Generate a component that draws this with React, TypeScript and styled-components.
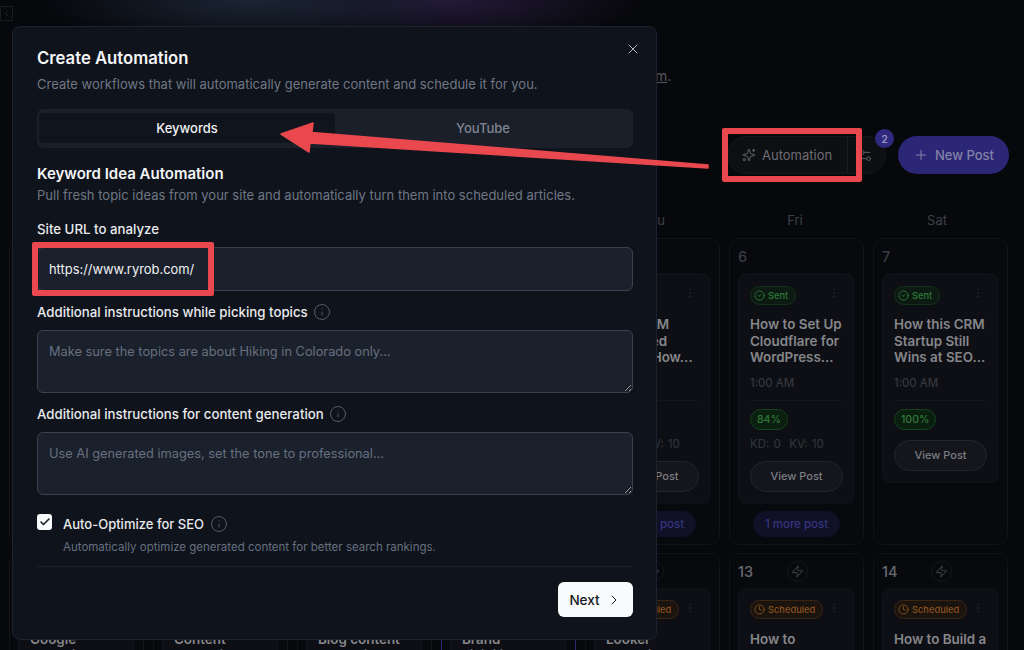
import React from 'react';
import styled, { createGlobalStyle } from 'styled-components';
import {
  Check,
  ChevronLeft,
  ChevronRight,
  CircleCheck,
  Clock,
  EllipsisVertical,
  Info,
  Plus,
  Settings2,
  Sparkles,
  X,
  Zap
} from 'lucide-react';

const GlobalStyle = createGlobalStyle`
  * {
    box-sizing: border-box;
  }

  html,
  body {
    margin: 0;
    padding: 0;
    background: #07080c;
    font-family: 'Inter', 'Liberation Sans', sans-serif;
  }
`;

const Page = styled.div`
  position: relative;
  width: 1024px;
  height: 650px;
  overflow: hidden;
  background:
    radial-gradient(ellipse 210px 48px at 250px 0, #1b2535 0%, rgba(27, 37, 53, 0) 100%),
    radial-gradient(ellipse 190px 44px at 450px 0, #231a38 0%, rgba(35, 26, 56, 0) 100%),
    #07080c;
`;

const TopStrip = styled.div`
  height: 66px;
  padding-top: 6px;
`;

const SidebarToggle = styled.div`
  display: flex;
  align-items: center;
  justify-content: center;
  width: 13px;
  height: 15px;
  border: 1px solid #181b22;
  color: #2c3038;
`;

const Note = styled.p`
  height: 20px;
  margin: 0;
  padding-left: 655px;
  font-size: 14px;
  line-height: 20px;
  color: #54565c;

  span {
    text-decoration: underline;
  }
`;

const Toolbar = styled.div`
  display: flex;
  justify-content: flex-end;
  gap: 12px;
  height: 38px;
  margin-top: 50px;
  padding-right: 15px;
`;

const AutomationGroup = styled.div`
  position: relative;
  display: flex;
  width: 159px;
  border: 1px solid #15171d;
  border-radius: 19px;
  background: #0e0f13;
`;

const AutomationButton = styled.div`
  display: flex;
  align-items: center;
  gap: 6px;
  width: 120px;
  padding-left: 14px;
  border-right: 1px solid #1b1d23;
  font-size: 13px;
  color: #6d6e73;
`;

const SettingsButton = styled.div`
  display: flex;
  align-items: center;
  padding-left: 10px;
  color: #5e6066;
`;

const CountBadge = styled.span`
  position: absolute;
  top: -8px;
  right: -9px;
  display: flex;
  align-items: center;
  justify-content: center;
  width: 19px;
  height: 19px;
  border-radius: 50%;
  background: #2f2a80;
  font-size: 10px;
  font-weight: 600;
  color: #9a9ac4;
`;

const NewPostButton = styled.div`
  display: flex;
  align-items: center;
  justify-content: center;
  gap: 6px;
  width: 111px;
  border-radius: 19px;
  background: #2b2675;
  font-size: 13px;
  font-weight: 500;
  color: #8382a8;
`;

const Weekdays = styled.div`
  display: grid;
  grid-template-columns: repeat(7, 133px);
  column-gap: 9px;
  height: 20px;
  margin-top: 36px;
  padding-left: 18.5px;
`;

const Weekday = styled.div`
  font-size: 13px;
  line-height: 20px;
  text-align: center;
  color: #3d4048;
`;

const CalendarGrid = styled.div`
  display: grid;
  grid-template-columns: repeat(7, 135px);
  gap: 8px 9px;
  margin-top: 8px;
  padding-left: 9px;
`;

const Cell = styled.div<{ $today?: boolean }>`
  display: flex;
  flex-direction: column;
  align-items: stretch;
  padding: 8px 8px 7px;
  border: 1px solid ${({ $today }) => ($today ? '#2b2872' : '#111319')};
  border-radius: 10px;
  background: #08090d;
`;

const CellHead = styled.div`
  display: flex;
  align-items: center;
  height: 21px;
  margin-top: -1px;
  margin-bottom: 6px;
`;

const DateNumber = styled.span<{ $future?: boolean }>`
  width: 49px;
  font-size: 14.5px;
  font-weight: 500;
  color: ${({ $future }) => ($future ? '#66686e' : '#393c44')};
`;

const BoltRound = styled.span`
  display: flex;
  align-items: center;
  justify-content: center;
  width: 21px;
  height: 21px;
  border: 1px solid #15171c;
  border-radius: 50%;
  color: #35373d;
`;

const PostCard = styled.div`
  padding: 11px;
  border: 1px solid #101217;
  border-radius: 8px;
  background: #0e0f14;
`;

const CardTop = styled.div`
  display: flex;
  align-items: center;
  justify-content: space-between;
  height: 20px;
  margin-right: 3px;
  color: #24262b;

  > svg {
    margin-bottom: 4px;
  }
`;

const StatusPill = styled.span<{ $scheduled?: boolean }>`
  display: inline-flex;
  align-items: center;
  gap: 3px;
  height: 19px;
  padding: 0 7px 0 3px;
  border: 1px solid ${({ $scheduled }) => ($scheduled ? '#3a2614' : '#12331a')};
  border-radius: 10px;
  background: ${({ $scheduled }) => ($scheduled ? '#1a130e' : '#0c1a11')};
  font-size: 9.3px;
  font-weight: 500;
  color: ${({ $scheduled }) => ($scheduled ? '#8a5220' : '#2f7a3a')};
`;

const CardTitle = styled.div`
  margin-top: 11px;
  font-size: 13.4px;
  font-weight: 600;
  line-height: 16.5px;
  white-space: pre-line;
  color: #85868a;
`;

const PostTime = styled.div`
  margin-top: 10px;
  font-size: 11.5px;
  line-height: 14px;
  color: #3a3d45;
`;

const CardDivider = styled.div`
  height: 1px;
  margin-top: 10px;
  background: #15171c;
`;

const ScorePill = styled.span`
  display: inline-flex;
  align-items: center;
  height: 21px;
  margin-top: 8px;
  padding: 0 6px;
  border: 1px solid #14441d;
  border-radius: 11px;
  background: #0b1f10;
  font-size: 10.5px;
  font-weight: 500;
  color: #2f7a3a;
`;

const KeywordStats = styled.div`
  margin-top: 7px;
  font-size: 11.5px;
  line-height: 14px;
  word-spacing: 1px;
  white-space: pre;
  color: #33363c;
`;

const ViewPostButton = styled.div`
  display: flex;
  align-items: center;
  justify-content: center;
  height: 31px;
  margin-top: 10px;
  border: 1px solid #22252c;
  border-radius: 16px;
  background: #14161c;
  font-size: 11px;
  font-weight: 500;
  color: #7c7d82;
`;

const MorePosts = styled.div`
  align-self: center;
  margin-top: 7px;
  padding: 0 12px;
  border-radius: 13px;
  background: #101026;
  font-size: 11.5px;
  font-weight: 500;
  line-height: 26px;
  color: #34347e;
`;

const Modal = styled.div`
  position: absolute;
  top: 26px;
  left: 12px;
  width: 645px;
  height: 614px;
  padding: 20px 23px 0 24px;
  border: 1px solid #1b2330;
  border-radius: 8px;
  background: #0f131b;
`;

const CloseButton = styled.div`
  position: absolute;
  top: 14px;
  right: 15px;
  display: flex;
  color: #b4b8c0;
`;

const ModalTitle = styled.h2`
  margin: 0;
  font-size: 16.7px;
  font-weight: 600;
  line-height: 22px;
  color: #f4f5f7;
`;

const MutedText = styled.p`
  margin: 5px 0 0;
  font-size: 13px;
  line-height: 20px;
  color: #6f7785;
`;

const Tabs = styled.div`
  display: grid;
  grid-template-columns: 1fr 1fr;
  height: 39px;
  margin-top: 15px;
  padding: 4px 2px 5px;
  border-radius: 6px;
  background: #1b1f2a;
`;

const Tab = styled.div<{ $active?: boolean }>`
  display: flex;
  align-items: center;
  justify-content: center;
  border-radius: 4px;
  background: ${({ $active }) => ($active ? '#10141c' : 'transparent')};
  font-size: 13px;
  font-weight: 500;
  color: ${({ $active }) => ($active ? '#f0f1f3' : '#7d8491')};
`;

const SectionTitle = styled.h3`
  margin: 15px 0 0;
  font-size: 15px;
  font-weight: 600;
  line-height: 22px;
  color: #f4f5f7;
`;

const SectionText = styled(MutedText)`
  margin-top: 0;
`;

const FieldLabel = styled.label<{ $first?: boolean }>`
  display: flex;
  align-items: center;
  gap: 5px;
  margin-top: ${({ $first }) => ($first ? '14px' : '11px')};
  font-size: 13.25px;
  font-weight: 500;
  line-height: 20px;
  color: #e9eaee;
`;

const InfoIcon = styled(Info)`
  flex: none;
  color: #59616e;
`;

const TextInput = styled.input`
  display: block;
  width: 100%;
  height: 44px;
  margin-top: 8px;
  padding: 0 11px;
  border: 1px solid #3a424f;
  border-radius: 6px;
  outline: none;
  background: #1b212c;
  font-family: inherit;
  font-size: 12.9px;
  color: #f0f1f3;
`;

const TextArea = styled.textarea`
  display: block;
  width: 100%;
  height: 63px;
  margin-top: 8px;
  padding: 12px 11px;
  border: 1px solid #3a424f;
  border-radius: 6px;
  outline: none;
  background: #1b212c;
  font-family: inherit;
  font-size: 12.8px;
  line-height: 18px;
  color: #f0f1f3;

  &::placeholder {
    color: #667080;
    opacity: 1;
  }
`;

const CheckRow = styled.div`
  display: flex;
  align-items: center;
  height: 20px;
  margin-top: 19px;
  font-size: 13px;
  font-weight: 500;
  color: #e9eaee;
`;

const CheckBox = styled.span`
  display: flex;
  align-items: center;
  justify-content: center;
  width: 15px;
  height: 16px;
  margin-right: 11px;
  margin-top: -4px;
  border-radius: 3px;
  background: #f9fafb;
  color: #10141c;
`;

const CheckLabel = styled.span`
  margin-right: 6px;
`;

const HelperText = styled.p`
  margin: 5px 0 0 26px;
  font-size: 11.5px;
  line-height: 16px;
  color: #667080;
`;

const Divider = styled.div`
  height: 1px;
  margin-top: 11px;
  background: #1b2330;
`;

const Actions = styled.div`
  display: flex;
  justify-content: flex-end;
  margin-top: 15px;
`;

const NextButton = styled.div`
  display: flex;
  align-items: center;
  justify-content: center;
  gap: 6px;
  width: 75px;
  height: 35px;
  border-radius: 6px;
  background: #f9fafb;
  font-size: 13.5px;
  font-weight: 500;
  color: #141820;
`;

const RedFrame = styled.div<{ $left: number; $top: number; $width: number; $height: number }>`
  position: absolute;
  left: ${({ $left }) => $left}px;
  top: ${({ $top }) => $top}px;
  width: ${({ $width }) => $width}px;
  height: ${({ $height }) => $height}px;
  border: 6px solid #e8484e;
  border-radius: 2px;
`;

const ArrowSvg = styled.svg`
  position: absolute;
  top: 0;
  left: 0;
`;

type TPost = {
  title: string;
  status: 'sent' | 'scheduled';
  score?: string;
  stats?: boolean;
};

type TDay = {
  date: string;
  post: TPost;
  more?: boolean;
  bolt?: boolean;
  today?: boolean;
};

const sent = (title: string, score: string, stats = true): TPost => ({
  title,
  status: 'sent',
  score,
  stats
});

const scheduled = (title: string): TPost => ({ title, status: 'scheduled' });

const days: TDay[] = [
  { date: '1', post: sent('How to Start\na Blog in\nFive Steps...', '84%') },
  { date: '2', post: sent('How to Grow\nYour Email\nList Fast...', '84%'), more: true },
  { date: '3', post: sent('SEO Basics\nfor Brand\nNew Sites...', '84%'), more: true },
  { date: '4', post: sent('Why Blogs\nStill Earn\nin Search...', '84%'), more: true },
  { date: '5', post: sent('Best CRM\nUnlocked\nGuide: How...', '84%'), more: true },
  {
    date: '6',
    post: sent('How to Set Up\nCloudflare for\nWordPress...', '84%'),
    more: true
  },
  {
    date: '7',
    post: sent('How this CRM\nStartup Still\nWins at SEO...', '100%', false)
  },
  { date: '8', post: scheduled('Google\nAnalytics'), bolt: true },
  { date: '9', post: scheduled('Content\nMarketing'), bolt: true },
  { date: '10', post: scheduled('Blog content\nstrategies'), bolt: true },
  { date: '11', post: scheduled('Brand\nvisibility'), bolt: true, today: true },
  { date: '12', post: scheduled('Looker\nAnalytics'), bolt: true },
  { date: '13', post: scheduled('How to\nPromote'), bolt: true },
  { date: '14', post: scheduled('How to Build a\nNewsletter'), bolt: true }
];

const weekdays = ['Sun', 'Mon', 'Tue', 'Wed', 'Thu', 'Fri', 'Sat'];

const DayCell: React.FC<{ day: TDay }> = ({ day }) => {
  const { post } = day;

  return (
    <Cell $today={day.today}>
      <CellHead>
        <DateNumber $future={day.bolt}>{day.date}</DateNumber>
        {day.bolt && (
          <BoltRound>
            <Zap size={13} />
          </BoltRound>
        )}
      </CellHead>
      <PostCard>
        <CardTop>
          {post.status === 'sent' ? (
            <StatusPill>
              <CircleCheck size={11} />
              Sent
            </StatusPill>
          ) : (
            <StatusPill $scheduled>
              <Clock size={11} />
              Scheduled
            </StatusPill>
          )}
          <EllipsisVertical size={12} />
        </CardTop>
        <CardTitle>{post.title}</CardTitle>
        {post.score && (
          <>
            <PostTime>1:00 AM</PostTime>
            <CardDivider />
            <ScorePill>{post.score}</ScorePill>
            {post.stats && <KeywordStats>KD: 0  KV: 10</KeywordStats>}
            <ViewPostButton>View Post</ViewPostButton>
          </>
        )}
      </PostCard>
      {day.more && <MorePosts>1 more post</MorePosts>}
    </Cell>
  );
};

const App: React.FC = () => {
  return (
    <Page>
      <GlobalStyle />
      <TopStrip>
        <SidebarToggle>
          <ChevronLeft size={9} />
        </SidebarToggle>
      </TopStrip>
      <Note>
        <span>m</span>.
      </Note>
      <Toolbar>
        <AutomationGroup>
          <AutomationButton>
            <Sparkles size={14} strokeWidth={1.5} />
            Automation
          </AutomationButton>
          <SettingsButton>
            <Settings2 size={15} strokeWidth={1.5} />
          </SettingsButton>
          <CountBadge>2</CountBadge>
        </AutomationGroup>
        <NewPostButton>
          <Plus size={16} strokeWidth={1.5} />
          New Post
        </NewPostButton>
      </Toolbar>
      <Weekdays>
        {weekdays.map(name => (
          <Weekday key={name}>{name}</Weekday>
        ))}
      </Weekdays>
      <CalendarGrid>
        {days.map(day => (
          <DayCell key={day.date} day={day} />
        ))}
      </CalendarGrid>

      <Modal>
        <CloseButton>
          <X size={16} strokeWidth={1.5} />
        </CloseButton>
        <ModalTitle>Create Automation</ModalTitle>
        <MutedText>
          Create workflows that will automatically generate content and schedule it for you.
        </MutedText>
        <Tabs>
          <Tab $active>Keywords</Tab>
          <Tab>YouTube</Tab>
        </Tabs>
        <SectionTitle>Keyword Idea Automation</SectionTitle>
        <SectionText>
          Pull fresh topic ideas from your site and automatically turn them into scheduled articles.
        </SectionText>
        <FieldLabel $first>Site URL to analyze</FieldLabel>
        <TextInput readOnly value="https://www.ryrob.com/" />
        <FieldLabel>
          Additional instructions while picking topics
          <InfoIcon size={18} strokeWidth={1.25} />
        </FieldLabel>
        <TextArea readOnly placeholder="Make sure the topics are about Hiking in Colorado only..." />
        <FieldLabel>
          Additional instructions for content generation
          <InfoIcon size={18} strokeWidth={1.25} />
        </FieldLabel>
        <TextArea readOnly placeholder="Use AI generated images, set the tone to professional..." />
        <CheckRow>
          <CheckBox>
            <Check size={12} strokeWidth={3} />
          </CheckBox>
          <CheckLabel>Auto-Optimize for SEO</CheckLabel>
          <InfoIcon size={18} strokeWidth={1.25} />
        </CheckRow>
        <HelperText>Automatically optimize generated content for better search rankings.</HelperText>
        <Divider />
        <Actions>
          <NextButton>
            Next
            <ChevronRight size={16} strokeWidth={1.5} />
          </NextButton>
        </Actions>
      </Modal>

      <RedFrame $left={722} $top={128} $width={140} $height={54} />
      <RedFrame $left={32} $top={242} $width={182} $height={54} />
      <ArrowSvg width="1024" height="650" viewBox="0 0 1024 650">
        <polygon
          points="281,134 313,123 312,132.5 708,165 708,168 310,143 309,152"
          fill="#e8484e"
          stroke="#e8484e"
          strokeWidth="1.5"
          strokeLinejoin="round"
        />
      </ArrowSvg>
    </Page>
  );
};

export default App;
